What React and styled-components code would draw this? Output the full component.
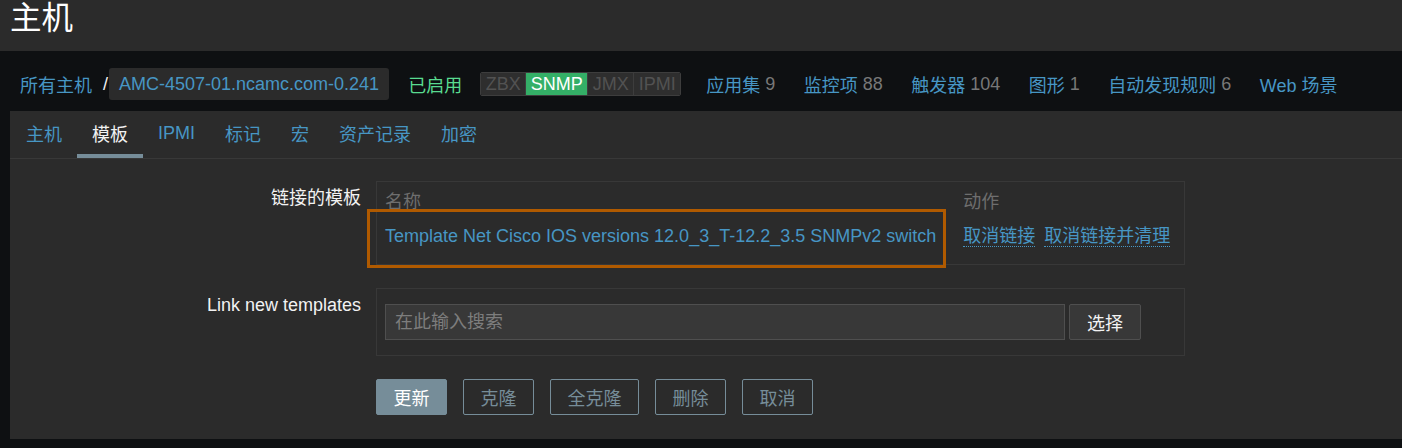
import React from 'react';
import styled, { createGlobalStyle } from 'styled-components';

const GlobalStyle = createGlobalStyle`
  html, body {
    margin: 0;
    padding: 0;
    background: #0e1012;
  }
  body {
    font-family: "Liberation Sans", Arial, "Noto Sans CJK SC", sans-serif;
    font-size: 18px;
    color: #f2f2f2;
  }
`;

const Header = styled.header`
  height: 51px;
  background: #2b2b2b;
  padding-left: 10px;
`;

const Title = styled.h1`
  margin: 0;
  font-size: 31.5px;
  font-weight: normal;
  line-height: 36px;
  color: #ffffff;
`;

const NavBar = styled.nav`
  display: flex;
  align-items: center;
  height: 60px;
  box-sizing: border-box;
  padding: 6px 0 0 20px;
  white-space: nowrap;
`;

const NavItem = styled.div`
  display: flex;
  align-items: center;
  margin-left: ${({ $gap }) => $gap || 0}px;
`;

const Link = styled.span`
  color: #4796c4;
  cursor: pointer;
`;

const Slash = styled.span`
  color: #f2f2f2;
  margin: 0 1px 0 11px;
`;

const HostBox = styled.span`
  display: inline-flex;
  align-items: center;
  height: 32px;
  padding: 0 10px 0 10px;
  background: #2b2b2b;
  border-radius: 3px;
  color: #4796c4;
`;

const Enabled = styled.span`
  color: #59db8f;
`;

const Badges = styled.div`
  display: flex;
  height: 24px;
  border: 1px solid #3d3d3d;
  border-radius: 2px;
  box-sizing: border-box;
  overflow: hidden;
`;

const Badge = styled.span`
  display: flex;
  align-items: center;
  padding: 0 4.5px;
  line-height: 22px;
  background: ${({ $on }) => ($on ? '#34af67' : '#2e2e2e')};
  color: ${({ $on }) => ($on ? '#ffffff' : '#525252')};
  & + & {
    border-left: 1px solid #3d3d3d;
  }
`;

const Count = styled.span`
  color: #787878;
  margin-left: 5px;
`;

const Panel = styled.section`
  margin-left: 10px;
  background: #2b2b2b;
  padding-bottom: 24px;
`;

const TabBar = styled.ul`
  display: flex;
  margin: 0;
  padding: 0 0 0 1px;
  list-style: none;
  border-bottom: 1px solid #383838;
`;

const Tab = styled.li`
  height: 47px;
  box-sizing: border-box;
  padding: 1px 15px 0;
  display: flex;
  align-items: center;
  border-bottom: 4px solid ${({ $active }) => ($active ? '#768d99' : 'transparent')};
  color: ${({ $active }) => ($active ? '#f2f2f2' : '#4796c4')};
  cursor: pointer;
`;

const Form = styled.div`
  display: grid;
  grid-template-columns: 351px auto;
  column-gap: 15px;
  row-gap: 23px;
  padding-top: 22px;
  justify-content: start;
`;

const Label = styled.label`
  text-align: right;
  padding-top: 7px;
  line-height: 21px;
  color: #f2f2f2;
`;

const Box = styled.div`
  position: relative;
  width: 809px;
  box-sizing: border-box;
  border: 1px solid #383838;
`;

const LinkedTable = styled.div`
  display: grid;
  grid-template-columns: auto auto;
  justify-content: start;
  padding-bottom: 10px;
`;

const HeadCell = styled.div`
  height: 36px;
  display: flex;
  align-items: center;
  padding: ${({ $first }) => ($first ? '0 9px 0 8px' : '0 0 0 18px')};
  color: #6e6e6e;
`;

const Cell = styled.div`
  padding: ${({ $first }) => ($first ? '8px 9px 7px 8px' : '8px 0 7px 18px')};
  line-height: 21px;
  white-space: nowrap;
`;

const Action = styled.span`
  color: #4796c4;
  border-bottom: 1px dotted #4796c4;
  cursor: pointer;
  & + & {
    margin-left: 9px;
  }
`;

const Highlight = styled.div`
  position: absolute;
  left: -10px;
  top: 27px;
  width: 579px;
  height: 59px;
  box-sizing: border-box;
  border: 3px solid #b05a00;
  pointer-events: none;
`;

const SearchRow = styled.div`
  display: flex;
  gap: 4px;
  padding: 15px 8px;
`;

const SearchInput = styled.input`
  width: 680px;
  height: 36px;
  box-sizing: border-box;
  padding: 0 9px;
  background: #383838;
  border: 1px solid #4f4f4f;
  color: #f2f2f2;
  font: inherit;
  outline: none;
  &::placeholder {
    color: #7d7d7d;
  }
`;

const SelectButton = styled.button`
  width: 72px;
  height: 36px;
  background: #383838;
  border: 1px solid #4f4f4f;
  border-radius: 2px;
  color: #f2f2f2;
  font: inherit;
  cursor: pointer;
`;

const Actions = styled.div`
  grid-column: 2;
  display: flex;
  gap: 16px;
`;

const Button = styled.button`
  height: 36px;
  padding: 0 16.5px;
  border: 1px solid #768d99;
  border-radius: 2px;
  background: ${({ $primary }) => ($primary ? '#768d99' : 'transparent')};
  color: ${({ $primary }) => ($primary ? '#ffffff' : '#768d99')};
  font: inherit;
  cursor: pointer;
`;

const tabs = ['主机', '模板', 'IPMI', '标记', '宏', '资产记录', '加密'];

const counters = [
  { name: '应用集', count: 9 },
  { name: '监控项', count: 88 },
  { name: '触发器', count: 104 },
  { name: '图形', count: 1 },
  { name: '自动发现规则', count: 6 },
  { name: 'Web 场景' },
];

export default function App() {
  return (
    <>
      <GlobalStyle />
      <Header>
        <Title>主机</Title>
      </Header>
      <NavBar>
        <NavItem>
          <Link>所有主机</Link>
          <Slash>/</Slash>
          <HostBox>AMC-4507-01.ncamc.com-0.241</HostBox>
        </NavItem>
        <NavItem $gap={19}>
          <Enabled>已启用</Enabled>
        </NavItem>
        <NavItem $gap={18}>
          <Badges>
            <Badge>ZBX</Badge>
            <Badge $on>SNMP</Badge>
            <Badge>JMX</Badge>
            <Badge>IPMI</Badge>
          </Badges>
        </NavItem>
        {counters.map((c, i) => (
          <NavItem key={c.name} $gap={i === 0 ? 25 : 28.5}>
            <Link>{c.name}</Link>
            {c.count !== undefined && <Count>{c.count}</Count>}
          </NavItem>
        ))}
      </NavBar>
      <Panel>
        <TabBar>
          {tabs.map((t) => (
            <Tab key={t} $active={t === '模板'}>
              {t}
            </Tab>
          ))}
        </TabBar>
        <Form>
          <Label>链接的模板</Label>
          <Box>
            <LinkedTable>
              <HeadCell $first>名称</HeadCell>
              <HeadCell>动作</HeadCell>
              <Cell $first>
                <Link>Template Net Cisco IOS versions 12.0_3_T-12.2_3.5 SNMPv2 switch</Link>
              </Cell>
              <Cell>
                <Action>取消链接</Action>
                <Action>取消链接并清理</Action>
              </Cell>
            </LinkedTable>
            <Highlight />
          </Box>

          <Label>Link new templates</Label>
          <Box>
            <SearchRow>
              <SearchInput placeholder="在此输入搜索" />
              <SelectButton>选择</SelectButton>
            </SearchRow>
          </Box>

          <Actions>
            <Button $primary>更新</Button>
            <Button>克隆</Button>
            <Button>全克隆</Button>
            <Button>删除</Button>
            <Button>取消</Button>
          </Actions>
        </Form>
      </Panel>
    </>
  );
}
